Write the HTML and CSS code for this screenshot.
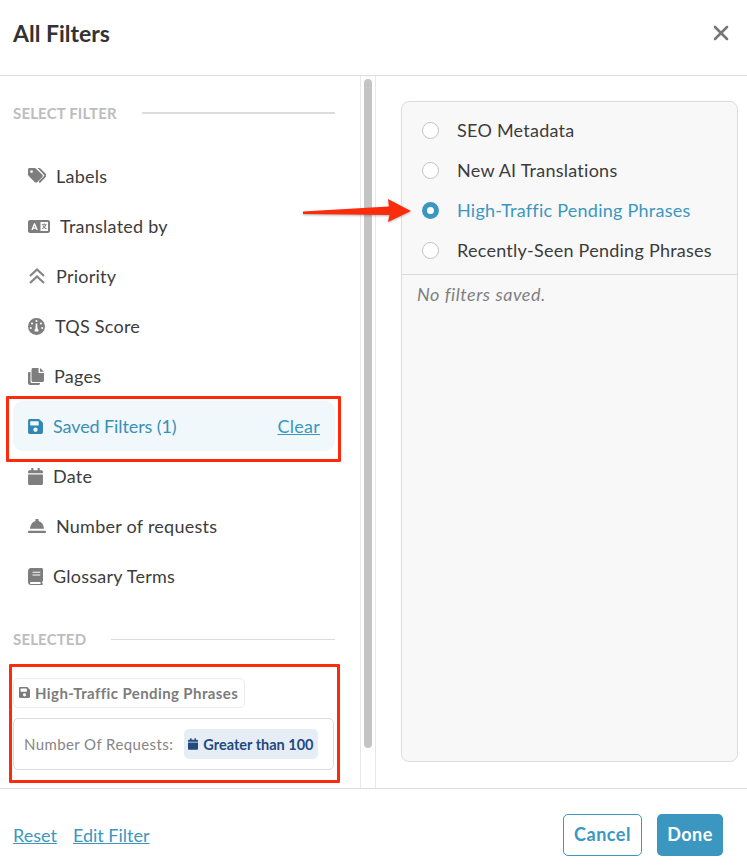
FILE: index.html
```html
<!DOCTYPE html>
<html lang="en">
<head>
    <meta charset="UTF-8">
    <meta name="viewport" content="width=device-width, initial-scale=1.0">
    <title>All Filters</title>
    <link rel="stylesheet" href="styles.css">
</head>
<body>
    <svg class="icon-defs" aria-hidden="true">
        <symbol id="icon-save" viewBox="0 0 448 512">
            <path d="M433.941 129.941l-83.882-83.882A48 48 0 0 0 316.118 32H48C21.49 32 0 53.49 0 80v352c0 26.51 21.49 48 48 48h352c26.51 0 48-21.49 48-48V163.882a48 48 0 0 0-14.059-33.941zM224 416c-35.346 0-64-28.654-64-64 0-35.346 28.654-64 64-64s64 28.654 64 64c0 35.346-28.654 64-64 64zm96-304.52V212c0 6.627-5.373 12-12 12H76c-6.627 0-12-5.373-12-12V108c0-6.627 5.373-12 12-12h228.52c3.183 0 6.235 1.264 8.485 3.515l3.48 3.48A11.996 11.996 0 0 1 320 111.48z"/>
        </symbol>
        <symbol id="icon-calendar" viewBox="0 0 448 512">
            <path d="M12 192h424c6.6 0 12 5.4 12 12v260c0 26.5-21.5 48-48 48H48c-26.5 0-48-21.5-48-48V204c0-6.6 5.4-12 12-12zm436-44v-36c0-26.5-21.5-48-48-48h-48V12c0-6.6-5.4-12-12-12h-40c-6.6 0-12 5.4-12 12v52H160V12c0-6.6-5.4-12-12-12h-40c-6.6 0-12 5.4-12 12v52H48C21.5 64 0 85.5 0 112v36c0 6.6 5.4 12 12 12h424c6.6 0 12-5.4 12-12z"/>
        </symbol>
    </svg>

    <div class="modal">
        <header class="modal-header">
            <h2>All Filters</h2>
            <svg class="close-icon" viewBox="0 0 16 16" width="16" height="16"><path d="M2 2l12 12M14 2L2 14"/></svg>
        </header>

        <div class="modal-body">
            <div class="filter-col">
                <div class="section-title"><span>SELECT FILTER</span></div>
                <ul class="filter-list">
                    <li class="filter-item">
                        <svg class="item-icon" width="18" height="16" viewBox="0 0 18 16"><path fill-rule="evenodd" d="M0 1.600C0 .7.7 0 1.600 0h5.200c.4 0 .8.200 1.100.5l6.400 6.300c.6.6.6 1.600 0 2.200l-5.200 5.200c-.6.6-1.600.6-2.200 0L.5 7.800C.2 7.500 0 7.100 0 6.700zM3.500 2.200a1.400 1.400 0 1 0 0 2.800 1.400 1.400 0 0 0 0-2.800z"/><path d="M10.200 0h1.200c.4 0 .8.200 1.100.5l5 5c1 1 1 2.800 0 3.800l-5 5.200c-.4.400-1 .400-1.400 0-.4-.400-.4-1 0-1.400l5-5.100c.3-.3.3-.8 0-1.100L9.500 0z"/></svg>
                        <span>Labels</span>
                    </li>
                    <li class="filter-item">
                        <svg class="item-icon" width="22" height="13" viewBox="0 0 22 13"><path fill-rule="evenodd" d="M2 0h18c1.100 0 2 .9 2 2v9c0 1.100-.9 2-2 2H2c-1.100 0-2-.9-2-2V2C0 .9.9 0 2 0zm10.500 2v9H20V2zM6 3.200L3.300 10h1.500l.5-1.300h2.500l.5 1.300h1.500L7 3.200zM5.800 7.500l.7-2 .7 2z"/><path d="M15.600 3.200h1v1h2v1h-.6c-.2.900-.6 1.600-1.100 2.200.4.300 1 .6 1.700.8l-.3 1c-.9-.3-1.500-.6-2.100-1.100-.5.400-1.200.8-2 1.100l-.4-1c.7-.2 1.200-.5 1.700-.8-.4-.5-.7-1-.9-1.600h1c.2.400.3.700.6 1 .3-.4.600-.9.700-1.600h-3.100v-1h2.300z"/></svg>
                        <span>Translated by</span>
                    </li>
                    <li class="filter-item">
                        <svg class="item-icon stroke-icon" width="18" height="16" viewBox="0 0 18 16"><path d="M2 8l7-6.500L16 8M2 15l7-6.500L16 15"/></svg>
                        <span>Priority</span>
                    </li>
                    <li class="filter-item">
                        <svg class="item-icon" width="17" height="17" viewBox="0 0 17 17"><path fill-rule="evenodd" d="M8.500 0a8.500 8.500 0 1 1 0 17 8.500 8.500 0 0 1 0-17zm0 2a1 1 0 1 0 0 2 1 1 0 0 0 0-2zM4 4.500a1 1 0 1 0 0 2 1 1 0 0 0 0-2zm9 0a1 1 0 1 0 0 2 1 1 0 0 0 0-2zM2.800 9a1 1 0 1 0 0 2 1 1 0 0 0 0-2zm11.400 0a1 1 0 1 0 0 2 1 1 0 0 0 0-2zM7.700 5.500l-.2 5.100c-.6.400-1 1-1 1.700 0 .4.100.8.300 1.200h3.400c.2-.4.300-.8.300-1.200 0-.7-.4-1.300-1-1.700l-.2-5.100z"/></svg>
                        <span>TQS Score</span>
                    </li>
                    <li class="filter-item">
                        <svg class="item-icon" width="16" height="17" viewBox="0 0 16 17"><path d="M5 0h5.500v4c0 .6.400 1 1 1H16v7.500c0 .8-.7 1.500-1.500 1.500H5c-.8 0-1.500-.7-1.500-1.500v-11C3.500.7 4.200 0 5 0zM12 0l4 3.700h-4z"/><path d="M1.200 4H2.500v9.500c0 .8.700 1.500 1.500 1.500h8v.5c0 .8-.7 1.500-1.500 1.500H2C.9 17 0 16.100 0 15V5.200C0 4.500.5 4 1.200 4z"/></svg>
                        <span>Pages</span>
                    </li>
                    <li class="filter-item is-active">
                        <svg class="item-icon" width="15" height="17"><use href="#icon-save"/></svg>
                        <span>Saved Filters (1)</span>
                        <a class="clear-link" href="#">Clear</a>
                    </li>
                    <li class="filter-item">
                        <svg class="item-icon" width="15" height="17"><use href="#icon-calendar"/></svg>
                        <span>Date</span>
                    </li>
                    <li class="filter-item">
                        <svg class="item-icon" width="18" height="14" viewBox="0 0 18 14"><path d="M8.100 0h1.800c.4 0 .7.300.7.700v1.200c3 .7 5 3.300 5.400 7.900H2C2.400 5.900 4.400 2.600 7.400 1.900V.7C7.400.3 7.700 0 8.100 0zM.7 11.700h16.600c.4 0 .7.300.7.700v.9c0 .4-.3.700-.7.700H.7c-.4 0-.7-.3-.7-.7v-.9c0-.4.300-.7.700-.7z"/></svg>
                        <span>Number of requests</span>
                    </li>
                    <li class="filter-item">
                        <svg class="item-icon" width="15" height="17" viewBox="0 0 15 17"><path fill-rule="evenodd" d="M3 0h10.500c.8 0 1.500.7 1.500 1.500v11c0 .6-.3 1-.8 1.300v1.400c.5.200.8.500.8.900 0 .5-.4.900-.9.900H3c-1.700 0-3-1.300-3-3V3C0 1.300 1.300 0 3 0zm1.500 3.700v1.100h7.800V3.700zm0 2.700v1.100h7.800V6.400zM3 14c-.6 0-1 .4-1 1s.4 1 1 1h9.500v-2z"/></svg>
                        <span>Glossary Terms</span>
                    </li>
                </ul>

                <div class="section-title selected-title"><span>SELECTED</span></div>
                <div class="selected-area">
                    <div class="saved-chip">
                        <svg width="11" height="13"><use href="#icon-save"/></svg>
                        <span>High-Traffic Pending Phrases</span>
                    </div>
                    <div class="request-box">
                        <span class="request-label">Number Of Requests:</span>
                        <span class="request-tag">
                            <svg width="10" height="12"><use href="#icon-calendar"/></svg>
                            Greater than 100
                        </span>
                    </div>
                    <div class="red-box selected-mark"></div>
                </div>
            </div>

            <div class="scroll-track"><div class="scroll-thumb"></div></div>

            <div class="options-col">
                <div class="options-panel">
                    <ul class="option-list">
                        <li class="option"><span class="radio"></span>SEO Metadata</li>
                        <li class="option"><span class="radio"></span>New AI Translations</li>
                        <li class="option is-checked"><span class="radio"></span>High-Traffic Pending Phrases</li>
                        <li class="option"><span class="radio"></span>Recently-Seen Pending Phrases</li>
                    </ul>
                    <p class="no-filters">No filters saved.</p>
                </div>
            </div>
        </div>

        <footer class="modal-footer">
            <div class="footer-links">
                <a href="#">Reset</a>
                <a href="#">Edit Filter</a>
            </div>
            <div class="footer-buttons">
                <button class="btn-cancel">Cancel</button>
                <button class="btn-done">Done</button>
            </div>
        </footer>

        <!-- annotations drawn on top of the screenshot -->
        <div class="red-box saved-mark"></div>
        <svg class="red-arrow" width="114" height="28" viewBox="0 0 114 28">
            <path d="M1 13.500L87 8.500 86 1 109 13 86 24 87.500 17 1 16z"/>
        </svg>
    </div>
</body>
</html>
```

FILE: styles.css
```css
* {
    margin: 0;
    padding: 0;
    box-sizing: border-box;
}

body {
    font-family: "Lato", "Open Sans", sans-serif;
    letter-spacing: 0.25px;
    color: #3c3c3c;
    background: #fff;
}

a {
    color: #3b97bf;
}

ul {
    list-style: none;
}

.icon-defs {
    display: none;
}

.modal {
    position: relative;
    height: 866px;
    display: flex;
    flex-direction: column;
    overflow: hidden;
}

.modal-header {
    height: 76px;
    flex-shrink: 0;
    padding: 0 18px 0 13px;
    display: flex;
    align-items: center;
    justify-content: space-between;
    border-bottom: 1px solid #dcdcdc;
}

.modal-header h2 {
    font-size: 23px;
    font-weight: 700;
    letter-spacing: 0;
    color: #333;
    margin-top: -9px;
}

.close-icon {
    margin-top: -9px;
    fill: none;
    stroke: #777;
    stroke-width: 2.6;
    stroke-linecap: round;
}

.modal-body {
    flex: 1;
    display: flex;
    min-height: 0;
}

/* left column */
.filter-col {
    width: 360px;
    flex-shrink: 0;
    padding: 0 25px 0 13px;
}

.section-title {
    display: flex;
    align-items: center;
    gap: 25px;
    height: 20px;
    margin-top: 27px;
    font-size: 15px;
    font-weight: 700;
    letter-spacing: 0.15px;
    color: #bdbdbd;
}

.section-title::after {
    content: "";
    flex: 1;
    border-top: 2px solid #dcdcdc;
}

.selected-title {
    margin-top: 28px;
}

.selected-title::after {
    border-top-width: 1px;
}

.filter-list {
    margin-top: 28px;
}

.filter-item {
    height: 50px;
    padding: 0 15px 1px;
    display: flex;
    align-items: center;
    gap: 10px;
    font-size: 18px;
    line-height: 20px;
    border-radius: 10px;
}

.item-icon {
    flex-shrink: 0;
    margin-top: 1px;
    fill: #7e7e7e;
}

.stroke-icon {
    fill: none;
    stroke: #858585;
    stroke-width: 2.2;
}

.is-active {
    background: #f0f8fb;
    color: #3b8fb5;
    letter-spacing: -0.1px;
}

.is-active .item-icon {
    fill: #2f88b3;
}

.clear-link {
    margin-left: auto;
    letter-spacing: 0.25px;
}

.selected-area {
    position: relative;
    margin-top: 29px;
}

.saved-chip {
    width: 232px;
    height: 30px;
    padding: 0 0 1px 5px;
    display: flex;
    align-items: center;
    gap: 5px;
    font-size: 15px;
    font-weight: 700;
    letter-spacing: 0.4px;
    color: #7c7c7c;
    border: 1px solid #ececec;
    border-radius: 5px;
}

.saved-chip svg {
    fill: #7c7c7c;
}

.request-box {
    width: 321px;
    height: 52px;
    margin-top: 10px;
    padding: 0 10px;
    display: flex;
    align-items: center;
    gap: 11px;
    border: 1px solid #dcdcdc;
    border-radius: 5px;
}

.request-label {
    font-size: 15px;
    letter-spacing: 0.4px;
    color: #868686;
}

.request-tag {
    height: 30px;
    padding: 0 4px;
    display: flex;
    align-items: center;
    gap: 5px;
    font-size: 14.5px;
    font-weight: 700;
    letter-spacing: 0;
    color: #234a7d;
    background: #e6edf7;
    border-radius: 5px;
}

.request-tag svg {
    fill: #234a7d;
}

.scroll-track {
    width: 16px;
    flex-shrink: 0;
    padding: 3px 3px 0;
    border-left: 1px solid #e8e8e8;
    border-right: 1px solid #e8e8e8;
}

.scroll-thumb {
    height: 669px;
    background: #c4c4c4;
    border-radius: 4px;
}

/* right column */
.options-col {
    flex: 1;
    padding: 25px 9px 26px 25px;
}

.options-panel {
    height: 100%;
    background: #f8f8f8;
    border: 1px solid #dcdcdc;
    border-radius: 8px;
}

.option-list {
    padding: 8px 0 4px;
    border-bottom: 1px solid #dcdcdc;
}

.option {
    height: 40px;
    padding-left: 20px;
    display: flex;
    align-items: center;
    gap: 18px;
    font-size: 18px;
    line-height: 20px;
}

.radio {
    width: 17px;
    height: 17px;
    flex-shrink: 0;
    background: #fff;
    border: 1px solid #c2c2c2;
    border-radius: 50%;
}

.is-checked {
    color: #3b97bf;
}

.is-checked .radio {
    border: 5px solid #3b97bf;
}

.no-filters {
    padding: 8px 15px;
    font-size: 18px;
    font-style: italic;
    letter-spacing: 0.55px;
    color: #808080;
}

/* footer */
.modal-footer {
    height: 78px;
    flex-shrink: 0;
    padding: 14px 24px 0 13px;
    display: flex;
    align-items: center;
    justify-content: space-between;
    border-top: 1px solid #dcdcdc;
}

.footer-links {
    display: flex;
    gap: 16px;
    font-size: 18px;
    letter-spacing: 0;
}

.footer-buttons {
    display: flex;
    gap: 15px;
}

.footer-buttons button {
    height: 42px;
    padding-bottom: 2px;
    font-family: inherit;
    font-size: 18px;
    font-weight: 700;
    letter-spacing: 0.5px;
    border-radius: 5px;
    cursor: pointer;
}

.btn-cancel {
    width: 79px;
    color: #3b97bf;
    background: #fff;
    border: 1px solid #3b97bf;
}

.btn-done {
    width: 66px;
    color: #fff;
    background: #3b97bf;
    border: none;
}

/* red annotations */
.red-box {
    position: absolute;
    border: 3px solid #fb2c0c;
    border-radius: 1px;
    pointer-events: none;
}

.saved-mark {
    left: 6px;
    top: 396px;
    width: 335px;
    height: 66px;
}

.selected-mark {
    left: -4px;
    top: -14px;
    width: 331px;
    height: 119px;
}

.red-arrow {
    position: absolute;
    left: 302px;
    top: 198px;
    fill: #fb2c0c;
    filter: drop-shadow(0 1px 1px rgba(0, 0, 0, 0.3));
}
```
